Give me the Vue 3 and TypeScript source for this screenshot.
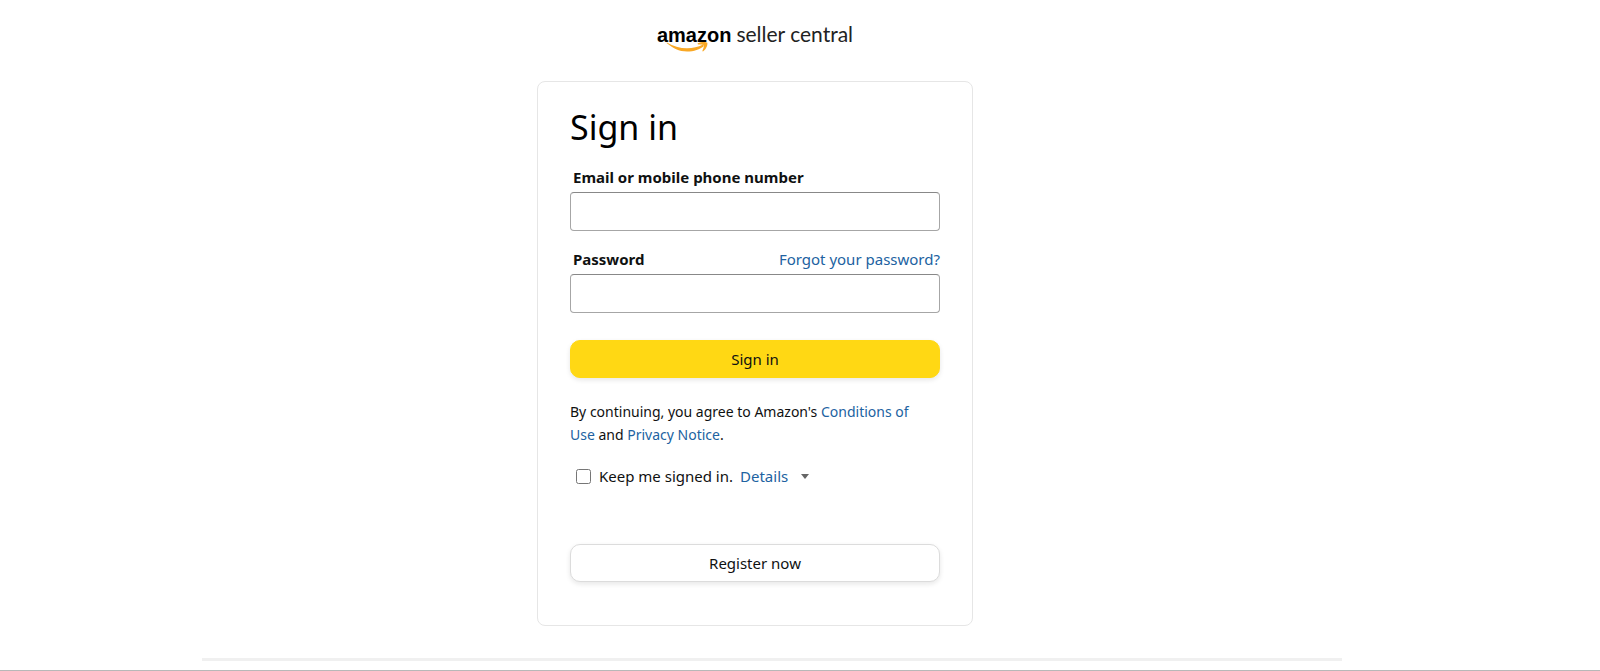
<script setup lang="ts">
import { ref } from 'vue'

const email = ref('')
const password = ref('')
const keepSignedIn = ref(false)
</script>

<template>
  <div class="page">
    <main class="content">
      <a class="logo" href="#" aria-label="amazon seller central">
        <span class="brand">
          amazon
          <svg class="smile" viewBox="0 0 42 12" aria-hidden="true">
            <path d="M0.500 1C7 6 13 9.500 21 9.500C28 9.500 34 7.500 38 4L37 2.500C32 5 27 6.300 21 6.300C14 6.300 7 4 1 0.500Z" />
            <path d="M31.500 1.500C35 -0.300 40 -0.200 41.300 0.800C42 3.500 39.500 8 37 9.500C36.300 9.500 36.300 9 36.600 8.200C37.500 6 38.300 4 37.800 3C37 2.200 35 2.300 32 2.600Z" />
          </svg>
        </span>
        <span class="product">seller central</span>
      </a>

      <form class="card" @submit.prevent>
        <h1>Sign in</h1>

        <div class="field">
          <div class="field-head">
            <label for="email">Email or mobile phone number</label>
          </div>
          <input id="email" v-model="email" class="text-input" type="text" />
        </div>

        <div class="field">
          <div class="field-head">
            <label for="password">Password</label>
            <a href="#">Forgot your password?</a>
          </div>
          <input id="password" v-model="password" class="text-input" type="password" />
        </div>

        <button class="button primary" type="submit">Sign in</button>

        <p class="legal">
          By continuing, you agree to Amazon's <a href="#">Conditions of Use</a> and
          <a href="#">Privacy Notice</a>.
        </p>

        <div class="keep">
          <input id="keep" v-model="keepSignedIn" type="checkbox" />
          <label for="keep">Keep me signed in.</label>
          <a class="details" href="#">Details<span class="caret"></span></a>
        </div>

        <button class="button secondary" type="button">Register now</button>
      </form>
    </main>
    <div class="footer">
      <div class="divider"></div>
    </div>
  </div>
</template>

<style>
body {
  margin: 0;
  background: #fff;
}
</style>

<style scoped>
.page {
  box-sizing: border-box;
  min-height: 100vh;
  border-bottom: 1px solid #b8b8b8;
  font-family: 'Noto Sans', sans-serif;
  font-size: 15px;
  line-height: 20px;
  color: #0f1111;
}

.content {
  display: flex;
  flex-direction: column;
  align-items: center;
  padding: 20px 90px 32px 0;
}

a {
  color: #2162a1;
  text-decoration: none;
}

.logo {
  display: flex;
  align-items: baseline;
  gap: 5px;
  margin-bottom: 32px;
  line-height: 28px;
  color: #222;
}

.brand {
  position: relative;
  font-family: 'Liberation Sans', sans-serif;
  font-size: 20px;
  font-weight: 700;
  color: #000;
}

.product {
  font-family: Lato, sans-serif;
  font-size: 21px;
}

.smile {
  position: absolute;
  left: 9px;
  top: 21px;
  width: 42px;
  height: 12px;
  fill: #f9a825;
}

.card {
  box-sizing: border-box;
  width: 436px;
  max-width: 100%;
  padding: 23px 32px 43px;
  border: 1px solid #e6e6e6;
  border-radius: 8px;
}

h1 {
  margin: 0 0 18px;
  font-size: 34px;
  font-weight: 400;
  line-height: 44px;
  color: #000;
}

.field {
  margin-bottom: 18px;
}

.field-head {
  display: flex;
  justify-content: space-between;
  padding-left: 3px;
  margin-bottom: 5px;
}

.field-head label {
  font-weight: 700;
}

.text-input {
  display: block;
  box-sizing: border-box;
  width: 100%;
  height: 39px;
  padding: 4px 8px;
  border: 1px solid #a6a6a6;
  border-top-color: #888;
  border-radius: 4px;
  background: #fff;
  font: inherit;
}

.button {
  display: block;
  width: 100%;
  height: 38px;
  padding: 0;
  border: 1px solid #dcdcdc;
  border-radius: 10px;
  background: #fff;
  box-shadow: 0 2px 5px rgba(15, 17, 17, 0.1);
  font: inherit;
  color: inherit;
}

.primary {
  margin-top: 27px;
  border-color: #ffd814;
  background: #ffd814;
}

.legal {
  margin: 22px 0 20px;
  padding-right: 10px;
  font-size: 14px;
  line-height: 23px;
}

.keep {
  display: flex;
  align-items: center;
  margin-bottom: 58px;
  padding-left: 6px;
}

.keep input {
  width: 15px;
  height: 15px;
  margin: 0 8px 0 0;
}

.details {
  display: flex;
  align-items: center;
  margin-left: 7px;
}

.caret {
  margin-left: 13px;
  border: 4px solid transparent;
  border-top: 5px solid #666;
  border-bottom: 0;
}

.footer {
  padding-right: 56px;
}

.divider {
  width: 1140px;
  max-width: 100%;
  height: 3px;
  margin: 0 auto;
  background: #f0f0f0;
}
</style>
